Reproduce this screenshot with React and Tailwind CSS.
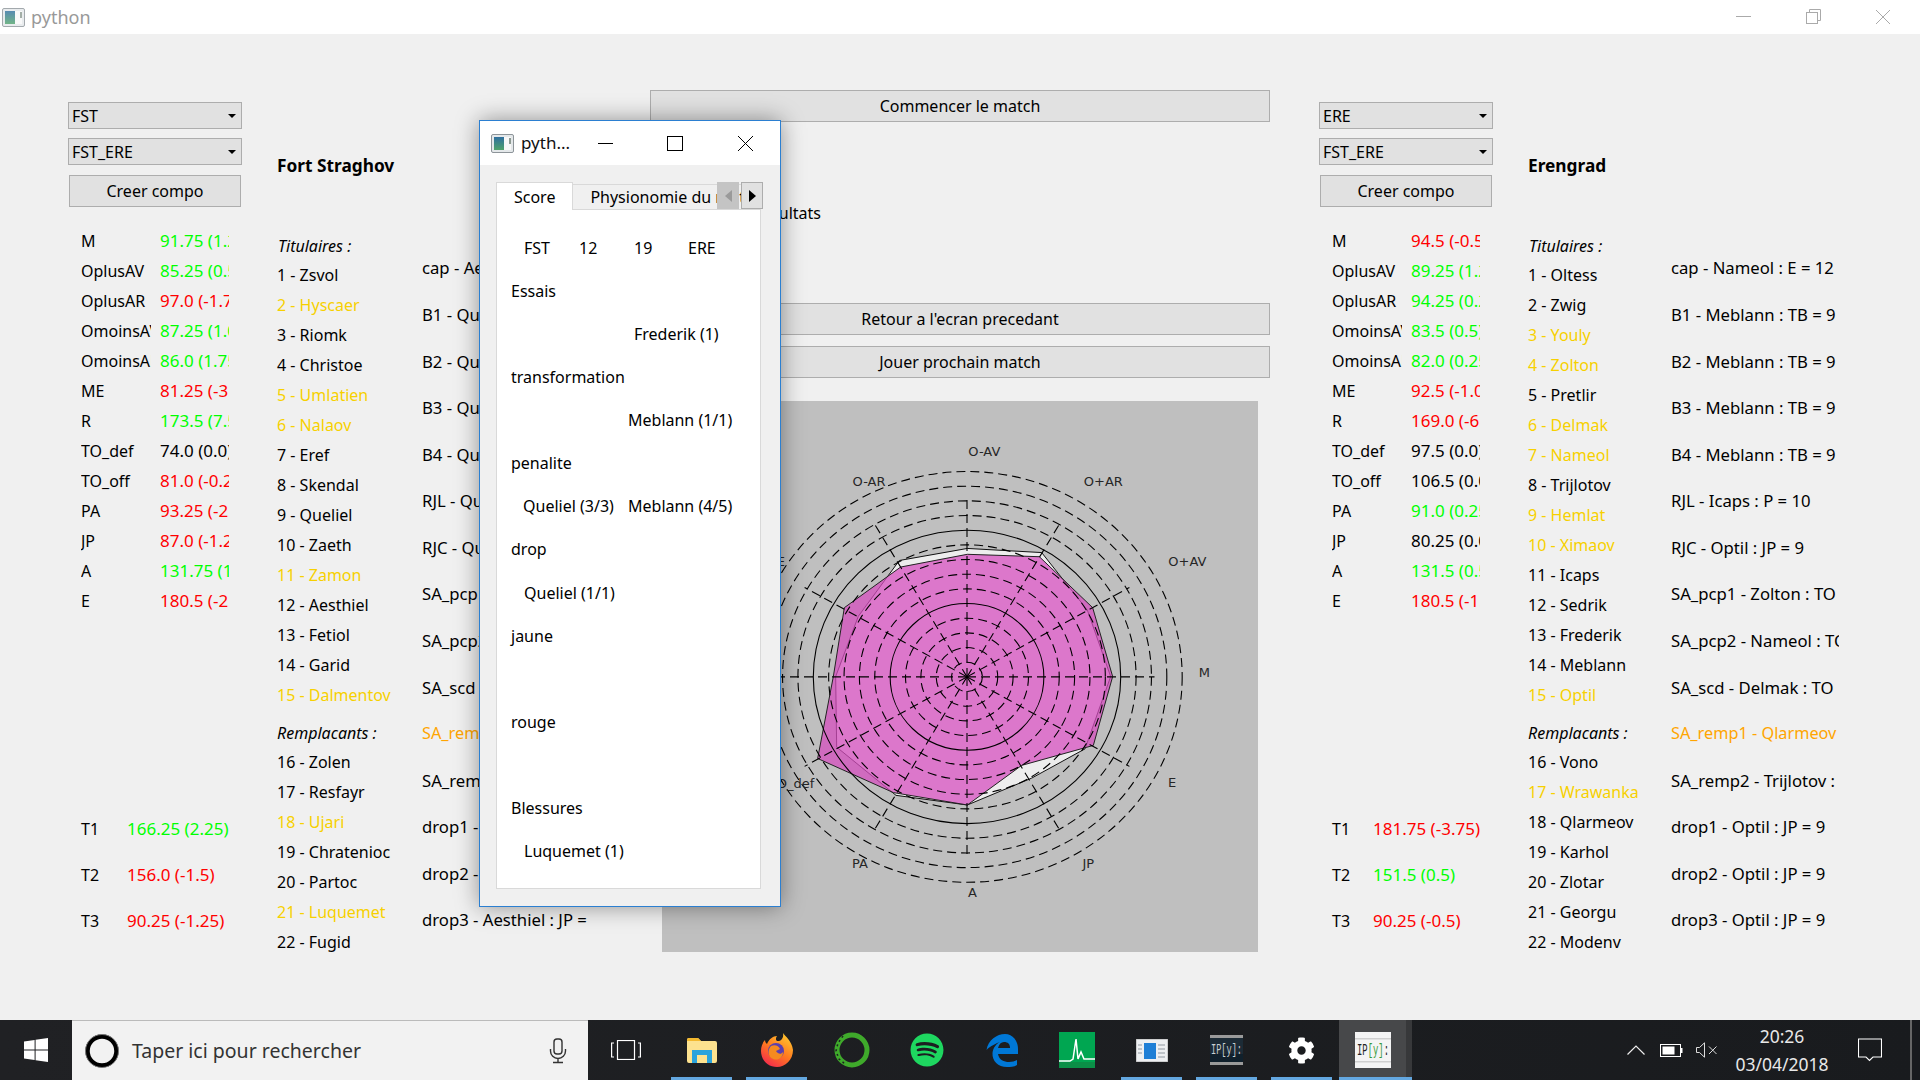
import React from "react";
import { FaCog, FaSpotify } from "react-icons/fa";

const G = "text-[#00ff00]", R = "text-[#ff0000]", K = "text-[#000000]", Y = "text-[#f7d000]", O = "text-[#ffa500] text-[16.3px]";

const leftStats = [
  ["M", "91.75 (1.25)", G], ["OplusAV", "85.25 (0.5)", G], ["OplusAR", "97.0 (-1.75)", R], ["OmoinsAV", "87.25 (1.0)", G],
  ["OmoinsAR", "86.0 (1.75)", G], ["ME", "81.25 (-3.0)", R], ["R", "173.5 (7.5)", G], ["TO_def", "74.0 (0.0)", K],
  ["TO_off", "81.0 (-0.25)", R], ["PA", "93.25 (-2.0)", R], ["JP", "87.0 (-1.25)", R], ["A", "131.75 (1.0)", G], ["E", "180.5 (-2.0)", R],
];
const rightStats = [
  ["M", "94.5 (-0.5)", R], ["OplusAV", "89.25 (1.25)", G], ["OplusAR", "94.25 (0.25)", G], ["OmoinsAV", "83.5 (0.5)", G],
  ["OmoinsAR", "82.0 (0.25)", G], ["ME", "92.5 (-1.0)", R], ["R", "169.0 (-6.0)", R], ["TO_def", "97.5 (0.0)", K],
  ["TO_off", "106.5 (0.0)", K], ["PA", "91.0 (0.25)", G], ["JP", "80.25 (0.0)", K], ["A", "131.5 (0.5)", G], ["E", "180.5 (-1.0)", R],
];
const leftPlayers = ["1 - Zsvol", "2 - Hyscaer*", "3 - Riomk", "4 - Christoe", "5 - Umlatien*", "6 - Nalaov*", "7 - Eref", "8 - Skendal", "9 - Queliel", "10 - Zaeth", "11 - Zamon*", "12 - Aesthiel", "13 - Fetiol", "14 - Garid", "15 - Dalmentov*"];
const leftSubs = ["16 - Zolen", "17 - Resfayr", "18 - Ujari*", "19 - Chratenioc", "20 - Partoc", "21 - Luquemet*", "22 - Fugid"];
const rightPlayers = ["1 - Oltess", "2 - Zwig", "3 - Youly*", "4 - Zolton*", "5 - Pretlir", "6 - Delmak*", "7 - Nameol*", "8 - Trijlotov", "9 - Hemlat*", "10 - Ximaov*", "11 - Icaps", "12 - Sedrik", "13 - Frederik", "14 - Meblann", "15 - Optil*"];
const rightSubs = ["16 - Vono", "17 - Wrawanka*", "18 - Qlarmeov", "19 - Karhol", "20 - Zlotar", "21 - Georgu", "22 - Modenv"];
const leftComp = ["cap - Aesthiel : E = 12", "B1 - Queliel : TB = 9", "B2 - Queliel : TB = 9", "B3 - Queliel : TB = 9", "B4 - Queliel : TB = 9", "RJL - Queliel : P = 10", "RJC - Queliel : JP = 9", "SA_pcp1 - Eref : TO", "SA_pcp2 - Garid : TO", "SA_scd - Zaeth : TO", "SA_remp1 - Zolen", "SA_remp2 - Fetiol : TO", "drop1 - Queliel : JP = 9", "drop2 - Queliel : JP = 9", "drop3 - Aesthiel : JP = 9"];
const rightComp = ["cap - Nameol : E = 12", "B1 - Meblann : TB = 9", "B2 - Meblann : TB = 9", "B3 - Meblann : TB = 9", "B4 - Meblann : TB = 9", "RJL - Icaps : P = 10", "RJC - Optil : JP = 9", "SA_pcp1 - Zolton : TO", "SA_pcp2 - Nameol : TO", "SA_scd - Delmak : TO", "SA_remp1 - Qlarmeov", "SA_remp2 - Trijlotov : TO", "drop1 - Optil : JP = 9", "drop2 - Optil : JP = 9", "drop3 - Optil : JP = 9"];

function Combo({ label, className = "" }) {
  return (
    <div className={"h-[27px] bg-[#e1e1e1] border border-[#adadad] flex items-center justify-between pl-[3px] pr-[5px] " + className}>
      <span>{label}</span>
      <span className="w-0 h-0 border-l-[4px] border-r-[4px] border-t-[4px] border-l-transparent border-r-transparent border-t-black" />
    </div>
  );
}

function Button({ label, className = "" }) {
  return <div className={"h-[32px] bg-[#e1e1e1] border border-[#adadad] flex items-center justify-center " + className}>{label}</div>;
}

function Row({ children, className = "" }) {
  return <div className={"h-[30px] flex items-center whitespace-nowrap " + className}>{children}</div>;
}

function Player({ text }) {
  const sub = text.endsWith("*");
  return <Row className={sub ? Y : ""}>{sub ? text.slice(0, -1) : text}</Row>;
}

function Team({ first, second, stats, t, tWidth, name, players, subs, comp, gapB, compOrange = 10 }) {
  return (
    <div className="flex">
      <div className="w-[174px] pt-[68px] shrink-0">
        <Combo label={first} />
        <Combo label={second} className="mt-[9px]" />
        <Button label="Creer compo" className="mt-[10px] mx-px" />
        <div className="mt-[19px] pl-[13px]">
          {stats.map(([a, b, c]) => (
            <Row key={a}>
              <span className="w-[70px] mr-[9px] overflow-hidden">{a}</span>
              <span className={"w-[69px] overflow-hidden text-[17px] " + c}>{b}</span>
            </Row>
          ))}
        </div>
        <div className="mt-[190px] pl-[13px]">
          {t.map(([a, b, c]) => (
            <div key={a} className="h-[46px] flex items-center whitespace-nowrap">
              <span style={{ width: tWidth }}>{a}</span>
              <span className={"text-[17px] " + c}>{b}</span>
            </div>
          ))}
        </div>
      </div>
      <div className="ml-[35px] pt-[120px] shrink-0" style={{ width: gapB }}>
        <div className="h-[24px] flex items-center font-bold text-[17.3px]">{name}</div>
        <Row className="mt-[53px] italic pl-px">Titulaires :</Row>
        <div className="-mt-px">{players.map((p) => <Player key={p} text={p} />)}</div>
        <div className="h-[29px] mt-[8px] flex items-center italic">Remplacants :</div>
        {subs.map((p) => <Player key={p} text={p} />)}
      </div>
      <div className="w-[168px] pt-[210.7px] shrink-0 overflow-hidden text-[16.7px]">
        {comp.map((c, i) => (
          <div key={c} className={"h-[46.57px] flex items-center whitespace-nowrap " + (i === compOrange ? O : "")}>{c}</div>
        ))}
      </div>
    </div>
  );
}

function AppIcon({ className }) {
  return (
    <svg viewBox="0 0 23 19" className={className}>
      <defs>
        <linearGradient id="qtg" x1="0" y1="0" x2="0" y2="1">
          <stop offset="0" stopColor="#2f6f9f" />
          <stop offset="1" stopColor="#4fa36a" />
        </linearGradient>
      </defs>
      <rect x="0.5" y="0.5" width="22" height="18" rx="1.5" fill="#e4e8ea" stroke="#8d9499" />
      <rect x="3" y="3" width="10" height="13" fill="url(#qtg)" />
      <rect x="13" y="3" width="7" height="13" fill="#f8f8f8" />
      <rect x="18" y="4" width="2" height="6" fill="#8d9a92" />
    </svg>
  );
}

const px = (x) => 108 + x / 3;
const py = (y) => 19 + y / 2.904;
const pt = (l) => l.map(([x, y]) => `${px(x)},${py(y)}`).join(" ");
const W = [[1022, 745], [952, 552], [815, 385], [592, 373], [388, 408], [265, 570], [197, 745], [200, 950], [378, 1090], [592, 1118], [785, 1040], [945, 955]];
const M = [[1028, 745], [968, 545], [808, 397], [592, 390], [392, 427], [223, 545], [190, 745], [143, 983], [370, 1082], [592, 1118], [755, 1003], [970, 945]];
const chartLabels = [
  ["O-AV", 643, 92], ["O-AR", 297, 180], ["O+AR", 1000, 180], ["O+AV", 1252, 412], ["M", 1303, 734], ["E", 1206, 1054],
  ["JP", 955, 1287], ["A", 607, 1373], ["PA", 270, 1287], ["ME", 16, 412], ["TO_def", 65, 1055],
];

function Radar() {
  const cx = 305, cy = py(746), sx = 15.37, sy = 14.67;
  const rings = Array.from({ length: 14 }, (_, i) => i + 1);
  const spokes = Array.from({ length: 12 }, (_, i) => (i * Math.PI) / 6);
  return (
    <svg width="596" height="551" viewBox="0 0 596 551" className="block">
      <polygon points={pt(W)} fill="#ededed" stroke="#111" strokeWidth="1" />
      <polygon points={pt(M)} fill="#d64fbf" fillOpacity="0.75" stroke="#222" strokeWidth="1" />
      {rings.map((r) => (
        <ellipse key={r} cx={cx} cy={cy} rx={r * sx} ry={r * sy} fill="none" stroke="#000" strokeWidth="1.1"
          strokeDasharray={r === 5 || r === 10 ? undefined : "9 5"} />
      ))}
      {spokes.map((a, i) => (
        <line key={i} x1={cx} y1={cy} x2={cx + 12.2 * sx * Math.cos(a)} y2={cy - 12.2 * sy * Math.sin(a)} stroke="#000" strokeWidth="1.1" strokeDasharray="9 5" />
      ))}
      {chartLabels.map(([t, x, y]) => (
        <text key={t} x={px(x)} y={py(y)} textAnchor="middle" dominantBaseline="central" fontSize="13" fill="#262626" fontFamily="DejaVu Sans">{t}</text>
      ))}
    </svg>
  );
}

function Dialog() {
  return (
    <div className="absolute left-[479px] top-[120px] w-[302px] h-[787px] border border-[#2b7fd1] bg-[#f0f0f0] shadow-[0_0_22px_rgba(0,0,0,0.4)] flex flex-col">
      <div className="h-[44px] bg-white flex items-center shrink-0 relative">
        <AppIcon className="w-[23px] h-[19px] ml-[11px]" />
        <span className="ml-[7px] text-[17px] text-[#111]">pyth...</span>
        <svg className="absolute left-[118px] top-[15px]" width="170" height="16" viewBox="0 0 170 16" fill="none" stroke="#000" strokeWidth="1">
          <path d="M0 7.5H15" />
          <rect x="69.5" y="0.5" width="15" height="14" />
          <path d="M140 0L155 15M155 0L140 15" />
        </svg>
      </div>
      <div className="pt-[17px] pl-[16px] pr-[19px] flex-1">
        <div className="relative h-[28px] flex">
          <div className="w-[78px] h-[28px] bg-white border border-b-0 border-[#d9d9d9] flex items-center justify-center z-10">Score</div>
          <div className="w-[189px] h-[26px] mt-[2px] border border-l-0 border-[#d9d9d9] pl-[17px] flex items-center whitespace-nowrap overflow-hidden">Physionomie du match</div>
          <div className="absolute left-[221px] top-0 w-[22px] h-[27px] bg-[#c4c4c4] flex items-center justify-center">
            <span className="w-0 h-0 border-y-[6px] border-r-[7px] border-y-transparent border-r-[#9a9a9a]" />
          </div>
          <div className="absolute left-[245px] top-0 w-[22px] h-[27px] bg-[#e1e1e1] border border-[#adadad] flex items-center justify-center">
            <span className="w-0 h-0 border-y-[6px] border-l-[7px] border-y-transparent border-l-black" />
          </div>
        </div>
        <div className="h-[680px] -mt-px bg-white border border-[#d9d9d9] pt-[16px] pl-[14px]">
          <div className="h-[43px] flex items-center pl-[13px]">
            <span className="w-[55px]">FST</span><span className="w-[55px]">12</span><span className="w-[54px]">19</span><span>ERE</span>
          </div>
          <div className="h-[43px] flex items-center">Essais</div>
          <div className="h-[43px] flex items-center pl-[123px]">Frederik (1)</div>
          <div className="h-[43px] flex items-center">transformation</div>
          <div className="h-[43px] flex items-center pl-[117px]">Meblann (1/1)</div>
          <div className="h-[43px] flex items-center">penalite</div>
          <div className="h-[43px] flex items-center pl-[12px]"><span className="w-[105px]">Queliel (3/3)</span><span>Meblann (4/5)</span></div>
          <div className="h-[43px] flex items-center">drop</div>
          <div className="h-[43px] mt-px flex items-center pl-[13px]">Queliel (1/1)</div>
          <div className="h-[43px] flex items-center">jaune</div>
          <div className="h-[43px]" />
          <div className="h-[43px] flex items-center">rouge</div>
          <div className="h-[43px]" />
          <div className="h-[43px] flex items-center">Blessures</div>
          <div className="h-[43px] flex items-center pl-[13px]">Luquemet (1)</div>
        </div>
      </div>
    </div>
  );
}

function Slot({ children, on }) {
  return (
    <div className="w-[75px] h-full relative flex items-center justify-center shrink-0">
      {children}
      {on && <span className="absolute left-[7px] right-[7px] bottom-0 h-[3px] bg-[#63a7e0]" />}
    </div>
  );
}

function IPy({ dark }) {
  return dark ? (
    <svg width="33" height="30" viewBox="0 0 33 30">
      <rect width="33" height="30" fill="#1c2b36" />
      <rect width="33" height="3" fill="#9a9a9a" />
      <rect y="27" width="33" height="3" fill="#9a9a9a" />
      <rect y="19" width="33" height="8" fill="#10202c" />
      <text x="1" y="19" fontSize="15" fontFamily="Liberation Mono" fill="#c8d0d4" textLength="31" lengthAdjust="spacingAndGlyphs">IP[y]:</text>
    </svg>
  ) : (
    <svg width="36" height="36" viewBox="0 0 36 36">
      <rect width="36" height="36" fill="#f4f4f4" />
      <rect y="6" width="36" height="1.5" fill="#cfcfcf" />
      <rect y="29" width="36" height="1.5" fill="#cfcfcf" />
      <text x="2" y="23" fontSize="17" fontFamily="Liberation Mono" fill="#222" textLength="32" lengthAdjust="spacingAndGlyphs">IP<tspan fill="#3a9a3a">[y]</tspan>:</text>
    </svg>
  );
}

function Taskbar() {
  return (
    <div className="h-[60px] shrink-0 flex bg-gradient-to-r from-[#202124] to-[#191b1e] text-white">
      <div className="w-[72px] flex items-center justify-center shrink-0">
        <svg width="24" height="24" viewBox="0 0 24 24" fill="#fff">
          <path d="M0 3.4L10.6 2V11.4H0ZM11.6 1.8L24 0V11.4H11.6ZM0 12.4H10.6V22L0 20.6ZM11.6 12.4H24V24L11.6 22.2Z" />
        </svg>
      </div>
      <div className="w-[516px] bg-[#f2f2f2] border-t border-[#bbbbbb] flex items-center shrink-0 text-[#333]">
        <svg width="34" height="34" viewBox="0 0 34 34" className="ml-[13px]">
          <circle cx="17" cy="17" r="14.5" fill="none" stroke="#000" strokeWidth="4.5" />
          <circle cx="17" cy="17" r="16.5" fill="none" stroke="#888" strokeWidth="0.8" />
        </svg>
        <span className="ml-[13px] w-[401px] text-[19.5px] whitespace-nowrap">Taper ici pour rechercher</span>
        <svg width="18" height="26" viewBox="0 0 18 26" fill="none" stroke="#333" strokeWidth="1.4" className="ml-[16px]">
          <rect x="5" y="1" width="8" height="15" rx="3" />
          <path d="M1.5 11V13a7.5 7.5 0 0 0 15 0V11M9 20.5V24M4 24.5H14" />
        </svg>
      </div>
      <div className="w-[76px] flex items-center justify-center shrink-0">
        <svg width="30" height="20" viewBox="0 0 30 20" fill="none" stroke="#fff" strokeWidth="1.2">
          <rect x="6.5" y="0.5" width="17" height="19" />
          <path d="M3 3H0.6V17H3M27 3H29.4V17H27" />
        </svg>
      </div>
      <Slot on>
        <svg width="32" height="26" viewBox="0 0 32 26">
          <path d="M1 3a2 2 0 0 1 2-2h9l3 3h14a2 2 0 0 1 2 2v18a2 2 0 0 1-2 2H3a2 2 0 0 1-2-2Z" fill="#fde28f" />
          <path d="M1 3a2 2 0 0 1 2-2h9l3 3H1Z" fill="#f4b92f" />
          <path d="M6 13H26V26H21V18H11V26H6Z" fill="#2aa3dc" />
        </svg>
      </Slot>
      <Slot on>
        <svg width="32" height="34" viewBox="0 0 32 34">
          <defs>
            <linearGradient id="ffg" x1="0.8" y1="0" x2="0.2" y2="1">
              <stop offset="0" stopColor="#ffcb2f" />
              <stop offset="0.5" stopColor="#ff7a1f" />
              <stop offset="1" stopColor="#f2264f" />
            </linearGradient>
          </defs>
          <path d="M22 0C24 3 31 8 32 17C32 27 24 34 16 34C7 34 0 27 0 18C0 13 2 9 4 7C4 9 5 10 6 11C8 6 12 3 16 3C14 6 15 8 17 8C20 8 23 5 22 0Z" fill="url(#ffg)" />
          <circle cx="15" cy="18" r="8" fill="#5a3fae" />
          <path d="M10 13C14 11 18 13 19 16L15 18C17 21 20 22 22 19C22 25 17 28 12 26C7 24 6 17 10 13Z" fill="#f58a1f" />
        </svg>
      </Slot>
      <Slot>
        <svg width="36" height="36" viewBox="0 0 36 36" fill="none">
          <circle cx="18" cy="18" r="15" stroke="#3faa2b" strokeWidth="5" />
          <path d="M9 4L4 11L2 19L5 27L11 32" stroke="#1f2023" strokeWidth="1.5" strokeDasharray="2 3" />
        </svg>
      </Slot>
      <Slot>
        <FaSpotify size={34} color="#1ed760" />
      </Slot>
      <Slot>
        <svg width="32" height="33" viewBox="0 0 32 33">
          <path fillRule="evenodd" fill="#0078d7" d="M0.5 16C2 6 11 0 19 0C27 0 32 7 32 15V20H12C13 26 18 28 23 28C26 28 29 27 31 26V31C28 33 24 33 21 33C12 33 6 27 6.5 19C7 14 10 10 14 8C11 9 4 12 0.5 16ZM12 14H24C24 10 22 8 18 8C15 8 13 10 12 14Z" />
        </svg>
      </Slot>
      <Slot>
        <svg width="36" height="36" viewBox="0 0 36 36">
          <rect width="36" height="36" fill="#00a651" />
          <path d="M0 29H11L14 27L17 7L19 27L22 20L25 27H36" fill="none" stroke="#fff" strokeWidth="1.5" />
          <rect y="30" width="36" height="6" fill="#0b8f47" />
        </svg>
      </Slot>
      <Slot on>
        <svg width="32" height="23" viewBox="0 0 32 23">
          <rect width="32" height="23" fill="#eef0f2" stroke="#aaa" />
          <rect x="8" y="4" width="12" height="16" fill="#1f7fd6" />
          <path d="M2 6H6M2 10H6M2 14H6M22 6H29M22 10H29M22 14H29M22 18H29" stroke="#8f98a0" strokeWidth="1.2" />
        </svg>
      </Slot>
      <Slot on><IPy dark /></Slot>
      <Slot on><FaCog size={27} color="#fff" /></Slot>
      <div className="w-[73px] h-full relative flex shrink-0">
        <div className="w-[67px] bg-[#47484a] flex items-center justify-center"><IPy /></div>
        <div className="w-[6px] bg-[#37383a]" />
        <span className="absolute inset-x-0 bottom-0 h-[3px] bg-[#63a7e0]" />
      </div>
      <div className="flex-1 flex items-center relative">
        <svg width="18" height="10" viewBox="0 0 18 10" fill="none" stroke="#eee" strokeWidth="1.2" className="ml-[215px]"><path d="M0.5 9.5L9 1L17.5 9.5" /></svg>
        <svg width="23" height="13" viewBox="0 0 23 13" fill="none" className="ml-[15px]">
          <rect x="0.5" y="0.5" width="20" height="12" stroke="#fff" />
          <rect x="2.5" y="2.5" width="12" height="8" fill="#fff" />
          <rect x="21" y="4" width="1.5" height="5" fill="#fff" />
        </svg>
        <svg width="22" height="16" viewBox="0 0 22 16" fill="none" stroke="#ddd" strokeWidth="1" className="ml-[13px]">
          <path d="M0.5 5.5H3.5L8.5 0.8V15.2L3.5 10.5H0.5Z" />
          <path d="M13 4.5L20.5 12M20.5 4.5L13 12" />
        </svg>
        <div className="w-[134px] -ml-[3px] flex flex-col items-center text-[17.5px] leading-[28px] text-[#e8e8e8]">
          <span>20:26</span>
          <span>03/04/2018</span>
        </div>
        <svg width="24" height="24" viewBox="0 0 24 24" fill="none" stroke="#fff" strokeWidth="1.1" className="ml-[9px]">
          <path d="M0.5 1H23.5V19H15L11.5 22.5L8 19H0.5Z" />
        </svg>
        <span className="absolute right-[8px] top-0 bottom-0 w-[2px] bg-[#666]" />
      </div>
    </div>
  );
}

export default function App() {
  return (
    <div className="relative w-[1920px] h-[1080px] overflow-hidden flex flex-col bg-[#f0f0f0] text-[#000] text-[16px] font-['Noto_Sans',sans-serif]">
      <div className="h-[34px] bg-white flex items-center shrink-0 relative">
        <AppIcon className="w-[23px] h-[19px] ml-[2px] opacity-80" />
        <span className="ml-[6px] text-[18px] text-[#999]">python</span>
        <svg className="absolute left-[1736px] top-[9px]" width="160" height="16" viewBox="0 0 160 16" fill="none" stroke="#aaa" strokeWidth="1">
          <path d="M0 7.5H15" />
          <rect x="70.5" y="3.5" width="11" height="11" />
          <path d="M73.5 3.5V0.5H84.5V11.5H81.5" />
          <path d="M140 1L154 15M154 1L140 15" />
        </svg>
      </div>
      <div className="flex-1 flex pl-[68px] min-h-0">
        <Team first="FST" second="FST_ERE" stats={leftStats} tWidth={46} name="Fort Straghov" players={leftPlayers} subs={leftSubs} comp={leftComp} gapB={145}
          t={[["T1", "166.25 (2.25)", G], ["T2", "156.0 (-1.5)", R], ["T3", "90.25 (-1.25)", R]]} />
        <div className="w-[620px] ml-[60px] pt-[56px] shrink-0">
          <Button label="Commencer le match" />
          <div className="h-[24px] mt-[79px] flex items-center justify-end pr-[449px]">Resultats</div>
          <Button label="Retour a l'ecran precedant" className="mt-[78px]" />
          <Button label="Jouer prochain match" className="mt-[11px]" />
          <div className="w-[596px] h-[551px] mt-[23px] ml-[12px] bg-[#bfbfbf]"><Radar /></div>
        </div>
        <div className="ml-[49px]">
          <Team first="ERE" second="FST_ERE" stats={rightStats} tWidth={41} name="Erengrad" players={rightPlayers} subs={rightSubs} comp={rightComp} gapB={143}
            t={[["T1", "181.75 (-3.75)", R], ["T2", "151.5 (0.5)", G], ["T3", "90.25 (-0.5)", R]]} />
        </div>
      </div>
      <Taskbar />
      <Dialog />
    </div>
  );
}
